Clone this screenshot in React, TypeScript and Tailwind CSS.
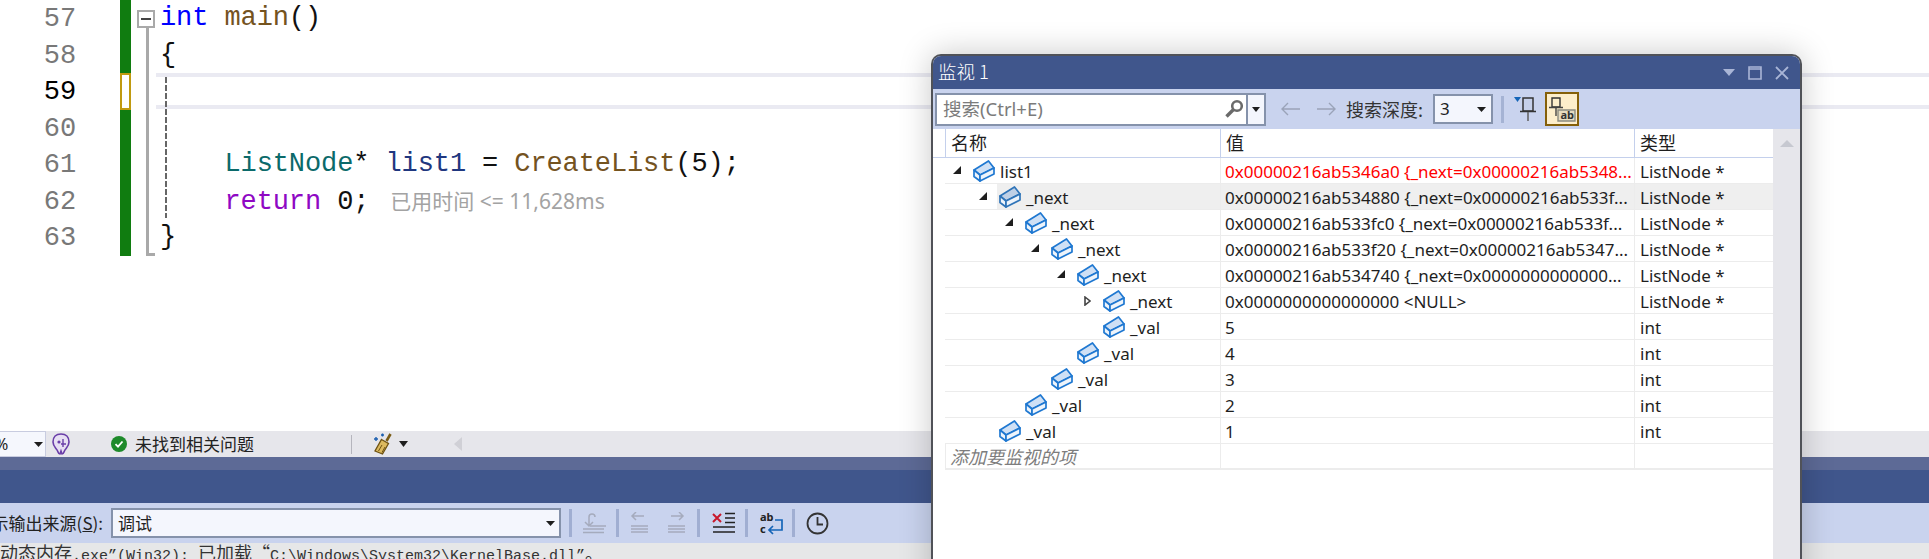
import type { ReactNode } from "react";

const sans = "font-['Noto_Sans','Noto_Sans_CJK_SC',sans-serif]";
const cjk = "font-['Noto_Sans_CJK_SC',sans-serif]";

function BoxIcon({ dark }: { dark?: boolean }) {
  const stroke = dark ? "#2f74b8" : "#1f78d1";
  return (
    <svg width="22" height="22" viewBox="0 0 22 22" className="shrink-0">
      <path d="M1 10 15.5 1 21 8 7 15Z" fill={dark ? "#bfd0e6" : "#cfe0f5"} stroke={stroke} strokeWidth="1.7" strokeLinejoin="round" />
      <path d="M1 10 7 15V21L1 16.5Z" fill="#eef4fb" stroke={stroke} strokeWidth="1.7" strokeLinejoin="round" />
      <path d="M7 15 21 8V14L7 21Z" fill="#eef4fb" stroke={stroke} strokeWidth="1.7" strokeLinejoin="round" />
    </svg>
  );
}

function Expander({ open }: { open?: boolean }) {
  if (open === undefined) return <span className="w-[18px] shrink-0" />;
  return (
    <span className="w-[18px] shrink-0 flex">
      {open ? (
        <svg width="8" height="8" viewBox="0 0 8 8" className="-mt-[1px]">
          <path d="M8 0V8H0Z" fill="#1e1e1e" />
        </svg>
      ) : (
        <svg width="7" height="10" viewBox="0 0 7 10" className="ml-[1px]">
          <path d="M1 1 6 5 1 9Z" fill="#fff" stroke="#444" strokeWidth="1.6" />
        </svg>
      )}
    </span>
  );
}

const watchRows = [
  { depth: 0, open: true, name: "list1", value: "0x00000216ab5346a0 {_next=0x00000216ab5348...", type: "ListNode *", red: true },
  { depth: 1, open: true, name: "_next", value: "0x00000216ab534880 {_next=0x00000216ab533f...", type: "ListNode *", hover: true },
  { depth: 2, open: true, name: "_next", value: "0x00000216ab533fc0 {_next=0x00000216ab533f...", type: "ListNode *" },
  { depth: 3, open: true, name: "_next", value: "0x00000216ab533f20 {_next=0x00000216ab5347...", type: "ListNode *" },
  { depth: 4, open: true, name: "_next", value: "0x00000216ab534740 {_next=0x0000000000000...", type: "ListNode *" },
  { depth: 5, open: false, name: "_next", value: "0x0000000000000000 <NULL>", type: "ListNode *" },
  { depth: 5, name: "_val", value: "5", type: "int" },
  { depth: 4, name: "_val", value: "4", type: "int" },
  { depth: 3, name: "_val", value: "3", type: "int" },
  { depth: 2, name: "_val", value: "2", type: "int" },
  { depth: 1, name: "_val", value: "1", type: "int" },
];

function WatchWindow() {
  return (
    <div className={`absolute left-[931px] top-[54px] w-[871px] h-[560px] flex flex-col rounded-t-[10px] border-x-2 border-t-2 border-[#505258] bg-white shadow-[0_0_32px_rgba(0,0,0,0.22)] overflow-hidden ${sans}`}>
      {/* title */}
      <div className="h-[33px] bg-[#40568c] flex items-center pl-[5px] pr-[11px] text-white shrink-0">
        <span className={`${cjk} text-[18.5px] leading-none font-light -mt-[3px]`}>监视 1</span>
        <svg width="12" height="7" viewBox="0 0 12 7" className="ml-auto">
          <path d="M0 0H12L6 7Z" fill="#a9b5d6" />
        </svg>
        <svg width="14" height="14" viewBox="0 0 14 14" className="ml-[13px]">
          <path d="M1 1H13V13H1ZM1 3H13" fill="none" stroke="#a9b5d6" strokeWidth="1.6" />
        </svg>
        <svg width="14" height="14" viewBox="0 0 14 14" className="ml-[13px]">
          <path d="M1 1 13 13M13 1 1 13" stroke="#a9b5d6" strokeWidth="1.8" />
        </svg>
      </div>
      {/* toolbar */}
      <div className="h-[40px] bg-[#c9d3ee] flex items-center pl-[2px] shrink-0">
        <div className="w-[331px] h-[33px] border-2 border-[#8592ab] flex bg-white">
          <div className="flex-1 flex items-center pl-[6px] pr-[2px] justify-between">
            <span className={`text-[18.5px] text-[#7b7b7b] leading-none ${sans}`}>搜索(Ctrl+E)</span>
            <svg width="20" height="20" viewBox="0 0 20 20">
              <circle cx="13" cy="7" r="4.8" fill="none" stroke="#6a6a6a" strokeWidth="2.6" />
              <path d="M9.5 10.5 2.5 17.5" stroke="#6a6a6a" strokeWidth="3.4" />
            </svg>
          </div>
          <div className="w-[18px] border-l-2 border-[#8592ab] bg-[#f4f6fd] flex items-center justify-center">
            <svg width="8" height="5" viewBox="0 0 8 5">
              <path d="M0 0H8L4 5Z" fill="#1e1e1e" />
            </svg>
          </div>
        </div>
        <svg width="20" height="14" viewBox="0 0 20 14" className="ml-[14px]">
          <path d="M20 7H2M8 1 2 7 8 13" fill="none" stroke="#9aa3b8" strokeWidth="1.4" />
        </svg>
        <svg width="20" height="14" viewBox="0 0 20 14" className="ml-[17px]">
          <path d="M0 7H18M12 1 18 7 12 13" fill="none" stroke="#9aa3b8" strokeWidth="1.4" />
        </svg>
        <span className={`${cjk} ml-[9px] text-[18px] text-[#333] leading-none whitespace-nowrap`}>搜索深度:</span>
        <div className="ml-[10px] w-[60px] h-[30px] border-2 border-[#8592ab] bg-[#f4f6fd] flex items-center justify-between pl-[5px] pr-[5px] text-[17px] text-[#222]">
          <span>3</span>
          <svg width="9" height="5" viewBox="0 0 9 5">
            <path d="M0 0H9L4.5 5Z" fill="#1e1e1e" />
          </svg>
        </div>
        <div className="ml-[8px] w-[3px] h-[27px] bg-[#a5b3d4]" />
        <svg width="23" height="26" viewBox="0 0 23 26" className="ml-[10px]">
          <path d="M0 1H7L3.5 6Z" fill="#1565b8" />
          <path d="M9 2H19V15H9Z" fill="#c6d0ea" stroke="#333" strokeWidth="1.5" />
          <path d="M6 15.5H22" stroke="#333" strokeWidth="1.6" />
          <path d="M14 16V25" stroke="#666" strokeWidth="1.6" />
        </svg>
        <div className="ml-[8px] w-[34px] h-[34px] border-[2px] border-[#85600a] bg-[#fdeecb]">
          <svg width="30" height="30" viewBox="0 0 30 30">
            <path d="M5 4H13V13H5Z" fill="none" stroke="#333" strokeWidth="1.4" />
            <path d="M2 13.5H16M9 14V22" stroke="#444" strokeWidth="1.4" />
            <path d="M11 16H28V27H11Z" fill="#e7dcc0" stroke="#8a8a80" strokeWidth="1.4" />
            <text x="13.5" y="25" fontSize="11" fontWeight="700" fill="#333" fontFamily="Noto Sans, sans-serif">ab</text>
          </svg>
        </div>
      </div>
      <div className="flex-1 flex min-h-0">
        <div className="w-[840px] flex flex-col shrink-0 text-[17px] text-[#1e1e1e]">
          {/* header */}
          <div className={`h-[29px] flex shrink-0 pl-[12px] border-b-[1.5px] border-[#c4d0ec] ${cjk} text-[18px]`}>
            <div className="w-[276px] pl-[5px] pb-[2px] border-l border-r border-[#c4d0ec] flex items-center">名称</div>
            <div className="w-[414px] pl-[5px] pb-[2px] border-r border-[#c4d0ec] flex items-center">值</div>
            <div className="flex-1 pl-[5px] pb-[2px] flex items-center">类型</div>
          </div>
          {watchRows.map((row, i) => (
            <div key={i} className="h-[26px] flex shrink-0 ml-[12px] border-b border-[#ececec] whitespace-nowrap">
              <div className="w-[276px] flex items-center border-r border-[#ececec]" style={{ paddingLeft: 8 + 26 * row.depth }}>
                <Expander open={row.open} />
                <div className={`flex-1 h-full flex items-center pl-[2px] ${row.hover ? "bg-[#efefef]" : ""}`}>
                  <BoxIcon dark={row.hover} />
                  <span className="ml-[5px] pt-[2px]">{row.name}</span>
                </div>
              </div>
              <div className={`w-[414px] pl-[4px] pt-[2px] flex items-center border-r border-[#ececec] overflow-hidden ${row.hover ? "bg-[#efefef]" : ""} ${row.red ? "text-[#ff0000]" : ""}`}>
                {row.value}
              </div>
              <div className={`flex-1 pl-[5px] pt-[2px] flex items-center ${row.hover ? "bg-[#efefef]" : ""}`}>{row.type}</div>
            </div>
          ))}
          <div className="h-[26px] flex shrink-0 ml-[12px] border-b-2 border-[#ececec]">
            <div className={`w-[276px] pl-[4px] border-l border-r border-[#ececec] flex items-center italic text-[#7d7d7d] ${cjk} text-[18px]`}>添加要监视的项</div>
            <div className="w-[414px] border-r border-[#ececec]" />
          </div>
        </div>
        {/* scrollbar */}
        <div className="flex-1 bg-[#e6e6eb] flex justify-center pt-[11px]">
          <svg width="14" height="7" viewBox="0 0 14 7">
            <path d="M7 0 14 7H0Z" fill="#c6c8d0" />
          </svg>
        </div>
      </div>
    </div>
  );
}

function Sep() {
  return <div className="w-[3px] h-[28px] bg-[#a0aed2] shrink-0" />;
}

const Ty = ({ c, children }: { c: string; children: ReactNode }) => <span style={{ color: c }}>{children}</span>;

const lines: { num: number; code?: ReactNode }[] = [
  { num: 57, code: <><Ty c="#0000ff">int</Ty> <Ty c="#74531f">main</Ty>()</> },
  { num: 58, code: "{" },
  { num: 59 },
  { num: 60 },
  { num: 61, code: <>    <Ty c="#0b6a6a">ListNode</Ty>* <Ty c="#1f377f">list1</Ty> = <Ty c="#74531f">CreateList</Ty>(5);</> },
  {
    num: 62,
    code: (
      <>
        {"    "}<Ty c="#8f08c4">return</Ty> 0;
        <span className={`ml-[21px] text-[21px] text-[#a3a3a3] tracking-normal ${sans}`}>已用时间 &lt;= 11,628ms</span>
      </>
    ),
  },
  { num: 63, code: "}" },
];

function Editor() {
  return (
    <div className="relative h-[431px] bg-white overflow-hidden font-['Liberation_Mono',monospace] text-[27px] tracking-[-0.1px]">
      {lines.map((l) => (
        <div key={l.num} className="h-[36.5px] flex">
          <div className={`w-[76px] text-right leading-[39px] ${l.num === 59 ? "text-black" : "text-[#787878]"}`}>{l.num}</div>
          <div className={`ml-[44px] w-[11px] ${l.num === 59 ? "border-2 border-[#c09a10] bg-white" : "bg-[#107c10]"}`} />
          <div className="relative w-[25px]">
            {l.num !== 57 ? <div className="absolute left-[15px] top-0 bottom-0 w-[2.5px] bg-[#a9a9a9]" /> : null}
            {l.num === 57 ? (
              <>
                <div className="absolute left-[6px] top-[10px] w-[18px] h-[18px] border-2 border-[#a9a9a9] flex items-center justify-center">
                  <div className="w-[10px] h-[2px] bg-[#444]" />
                </div>
                <div className="absolute left-[15px] top-[28px] bottom-0 w-[2.5px] bg-[#a9a9a9]" />
              </>
            ) : null}
            {l.num === 63 ? <div className="absolute left-[15px] bottom-0 w-[9px] h-[2.5px] bg-[#a9a9a9]" /> : null}
          </div>
          <div className={`flex-1 pl-[4px] whitespace-pre leading-[37px] text-[#111] ${l.num === 59 ? "h-[36px] border-y-4 border-[#eaeaf2]" : ""}`}>{l.code}</div>
        </div>
      ))}
      <div className="absolute left-[165px] top-[77px] h-[141px] w-[2px] bg-[repeating-linear-gradient(to_bottom,#666_0,#666_6px,transparent_6px,transparent_8px)]" />
    </div>
  );
}

function StatusBar() {
  return (
    <div className={`h-[26px] bg-[#e6e6eb] flex items-center text-[17px] text-[#222] ${cjk}`}>
      <div className="w-[46px] h-full bg-[#f5f7fd] border-r border-y border-[#c8cce0] flex items-center justify-between pr-[2px] shrink-0">
        <span className={`${sans} -ml-[5px] text-[16px]`}>%</span>
        <svg width="9" height="5" viewBox="0 0 9 5">
          <path d="M0 0H9L4.5 5Z" fill="#1e1e1e" />
        </svg>
      </div>
      <svg width="20" height="24" viewBox="0 0 20 24" className="ml-[5px]">
        <path d="M10 2C5 2 2 5 2 10c0 4 3 6 4 8 1 1 1 4 3 4l1-3 1 3c2 0 2-3 3-4 1-2 4-4 4-8 0-5-3-8-8-8Z" fill="#e7dff3" stroke="#6a3ea8" strokeWidth="1.6" />
        <circle cx="8" cy="10" r="1.6" fill="#6a3ea8" />
        <path d="M12 7v8M10 12h5" stroke="#6a3ea8" strokeWidth="1.4" />
      </svg>
      <svg width="16" height="16" viewBox="0 0 16 16" className="ml-[40px]">
        <circle cx="8" cy="8" r="8" fill="#1e8a2b" />
        <path d="M4.5 8.2 7 10.7 11.5 5.5" fill="none" stroke="#fff" strokeWidth="1.8" />
      </svg>
      <span className="ml-[8px] whitespace-nowrap">未找到相关问题</span>
      <div className="ml-[97px] w-px h-[19px] bg-[#b5b5bd]" />
      <svg width="21" height="22" viewBox="0 0 21 22" className="ml-[20px]">
        <path d="M14.5 8 18.5 1" stroke="#7a5c16" strokeWidth="2.6" />
        <path d="M9.5 6.5 16.5 10.5 10.5 21 3 18Z" fill="#dcb95e" stroke="#6f5312" strokeWidth="1.3" />
        <path d="M6.5 18 10 12M10 19.5 13 14" stroke="#6f5312" strokeWidth="1" />
        <path d="M2 6h4M4 4v4M9 2h3M10.5.5v3" stroke="#1c5fb0" strokeWidth="1.4" />
      </svg>
      <svg width="9" height="6" viewBox="0 0 9 6" className="ml-[6px]">
        <path d="M0 0H9L4.5 6Z" fill="#1e1e1e" />
      </svg>
      <svg width="8" height="14" viewBox="0 0 8 14" className="ml-[46px]">
        <path d="M8 0V14L0 7Z" fill="#d0d0d6" />
      </svg>
    </div>
  );
}

function OutputPanel() {
  return (
    <div className="flex-1 flex flex-col overflow-hidden">
      <div className="h-[13px] bg-[#5d6a96]" />
      <div className="h-[33px] bg-[#40568c]" />
      <div className="h-[40px] bg-[#c9d3ee] flex items-center shrink-0">
        <div className={`w-[103px] overflow-hidden flex justify-end text-[17px] text-[#222] whitespace-nowrap shrink-0 ${cjk}`}>
          <span>显示输出来源(<span className="underline">S</span>):</span>
        </div>
        <div className={`ml-[8px] w-[450px] h-[30px] border-2 border-[#8592ab] bg-[#f4f6fd] flex items-center justify-between pl-[5px] pr-[4px] text-[17px] text-[#222] shrink-0 ${cjk}`}>
          <span>调试</span>
          <svg width="9" height="5" viewBox="0 0 9 5">
            <path d="M0 0H9L4.5 5Z" fill="#1e1e1e" />
          </svg>
        </div>
        <div className="ml-[8px]"><Sep /></div>
        <svg width="24" height="22" viewBox="0 0 24 22" className="ml-[10px] shrink-0">
          <path d="M7 13V5a3 3 0 0 1 6 0M3 10l4 4 4-4" fill="none" stroke="#a5abbd" strokeWidth="1.5" />
          <path d="M8 14H24M1 17H22M1 20.5H22" stroke="#a5abbd" strokeWidth="1.7" />
        </svg>
        <div className="ml-[10px]"><Sep /></div>
        <svg width="18" height="22" viewBox="0 0 18 22" className="ml-[11px] shrink-0">
          <path d="M14 4H2M6 0 2 4 6 8" fill="none" stroke="#a5abbd" strokeWidth="1.5" />
          <path d="M1 14H18M1 17H18M1 20H18" stroke="#a5abbd" strokeWidth="1.7" />
        </svg>
        <svg width="18" height="22" viewBox="0 0 18 22" className="ml-[19px] shrink-0">
          <path d="M4 4H16M12 0 16 4 12 8" fill="none" stroke="#a5abbd" strokeWidth="1.5" />
          <path d="M1 14H18M1 17H18M1 20H18" stroke="#a5abbd" strokeWidth="1.7" />
        </svg>
        <div className="ml-[12px]"><Sep /></div>
        <svg width="23" height="22" viewBox="0 0 23 22" className="ml-[12px] shrink-0">
          <path d="M1 2 9 10M9 2 1 10" stroke="#c8182c" strokeWidth="2" />
          <path d="M13 1.5H23M13 6H23M13 10.5H23M1 15H23M1 20H23" stroke="#222" strokeWidth="1.6" />
        </svg>
        <div className="ml-[10px]"><Sep /></div>
        <svg width="24" height="24" viewBox="0 0 24 24" className="ml-[12px] shrink-0">
          <text x="0" y="10" fontSize="11" fontWeight="700" fill="#222" fontFamily="Noto Sans, sans-serif">ab</text>
          <text x="0" y="22" fontSize="11" fontWeight="700" fill="#222" fontFamily="Noto Sans, sans-serif">c</text>
          <path d="M15 9H22V19H9M13 15 9 19 13 23" fill="none" stroke="#1565b8" strokeWidth="1.7" />
        </svg>
        <div className="ml-[8px]"><Sep /></div>
        <svg width="23" height="23" viewBox="0 0 23 23" className="ml-[11px] shrink-0">
          <circle cx="11.5" cy="11.5" r="10" fill="none" stroke="#333" strokeWidth="1.8" />
          <path d="M11.5 5V12.5H17" fill="none" stroke="#333" strokeWidth="1.8" />
        </svg>
      </div>
      <div className="h-[16px] bg-[#e6e7e8] overflow-hidden whitespace-pre font-['Liberation_Mono',monospace] text-[15px] text-[#333] leading-[19px]">
        <span className={`${cjk} text-[18px]`}>动态内存</span>.exe”(Win32): <span className={`${cjk} text-[18px]`}>已加载“</span>C:\Windows\System32\KernelBase.dll”<span className={`${cjk} text-[18px]`}>。</span>
      </div>
    </div>
  );
}

export default function App() {
  return (
    <div className="relative w-[1929px] h-[559px] flex flex-col overflow-hidden bg-white">
      <Editor />
      <StatusBar />
      <OutputPanel />
      <WatchWindow />
    </div>
  );
}
